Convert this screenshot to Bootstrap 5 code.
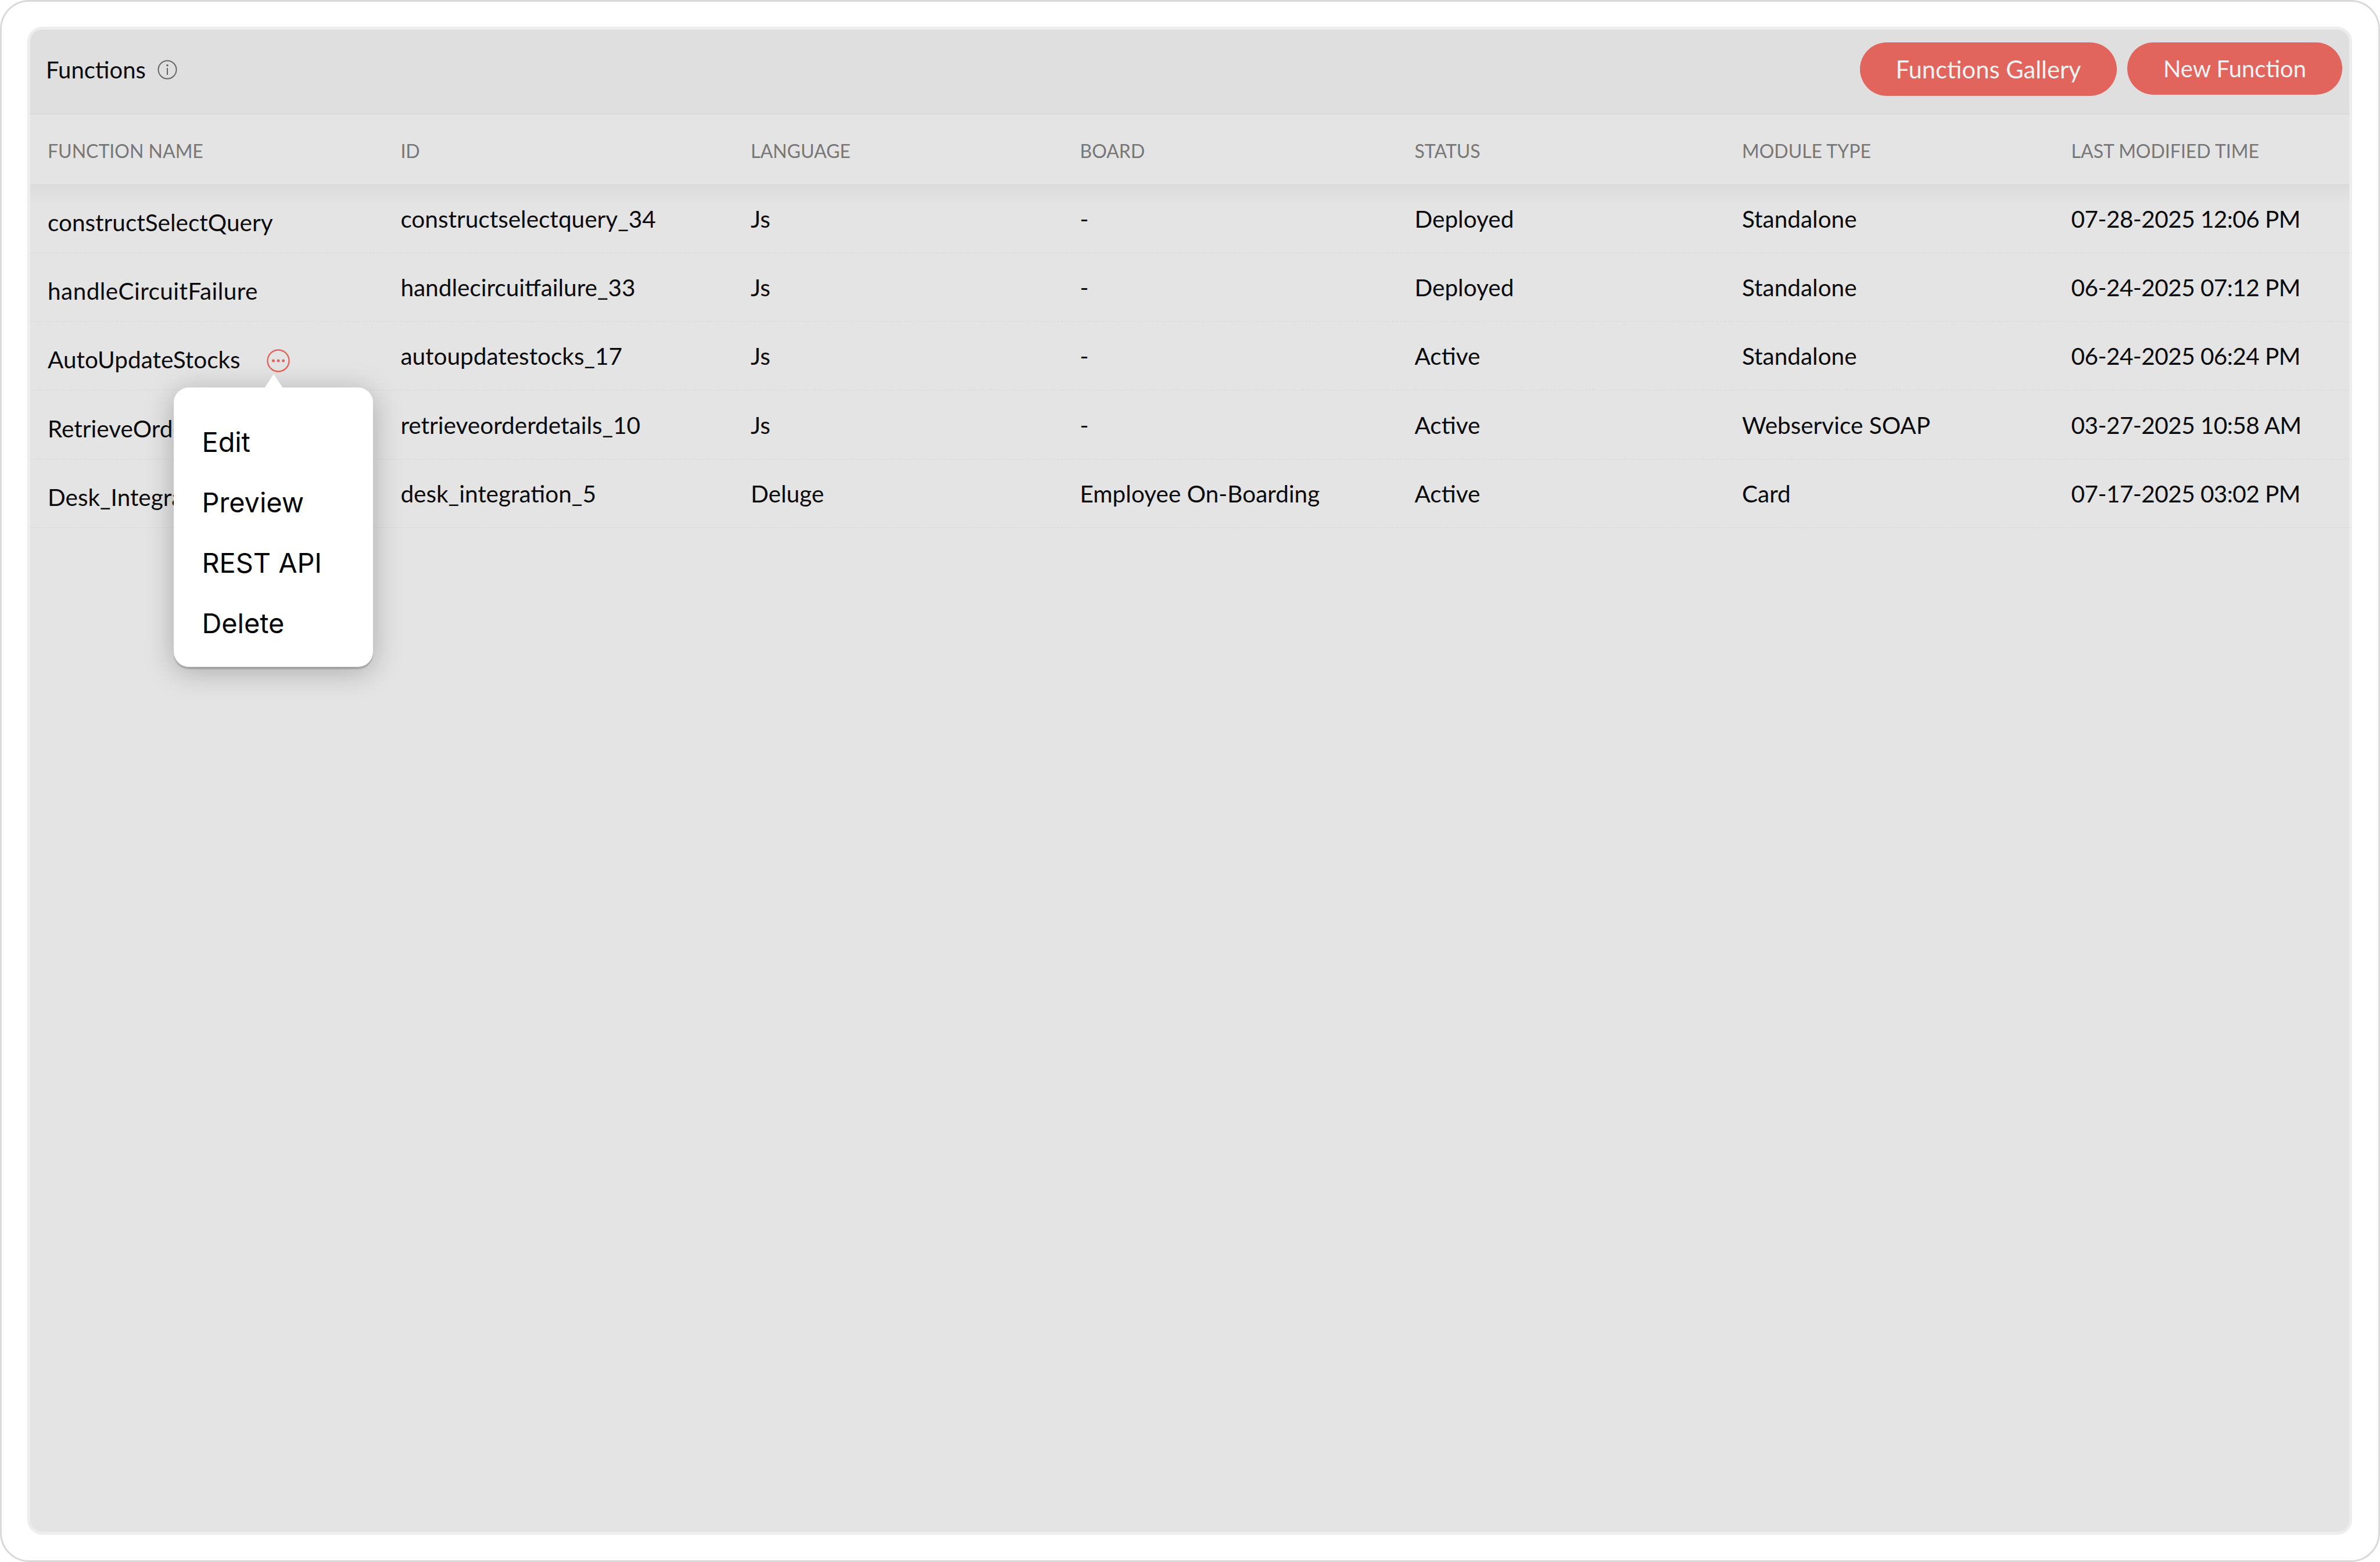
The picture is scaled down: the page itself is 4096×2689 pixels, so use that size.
<!DOCTYPE html>
<html lang="en">
<head>
<meta charset="utf-8">
<title>Functions</title>
<link href="https://cdn.jsdelivr.net/npm/bootstrap@5.3.0/dist/css/bootstrap.min.css" rel="stylesheet">
<style>
html,body{height:100%;margin:0;background:#fff;font-family:"Lato","Liberation Sans",sans-serif;}
.fn-frame{height:2689px;width:4096px;border:3px solid #d9d9d9;border-radius:50px;padding:43px 45px 44px 44px;background:#fff;}
.fn-panel{height:100%;border:5px solid #ededed;border-radius:26px;background:#e4e4e4;position:relative;overflow:hidden;}
.fn-head{height:146px;background:#dfdfdf;border-bottom:2px solid #d9d9d9;padding:22px 12px 0 27px;}
.fn-title{font-size:40px;color:#0a0a0a;line-height:1;margin-top:27px;}
.fn-info{width:36px;height:36px;margin-left:19px;margin-top:29px;}
.fn-btn{background:#e1655c;color:#f2f2f2;border:0;border-radius:46px;font-size:41.7px;line-height:1;padding:0;font-family:"Lato","Liberation Sans",sans-serif;}
.fn-btn:hover,.fn-btn:active{background:#e1655c!important;color:#f2f2f2!important;}
.fn-btn-gallery{width:442px;height:92px;padding-top:2px;}
.fn-btn-new{width:370px;height:90px;font-size:40px;}
.fn-table{table-layout:fixed;width:100%;margin:0;--bs-table-bg:transparent;}
.fn-table th,.fn-table td{padding:0 0 0 30px;vertical-align:middle;border:0;color:#0a0a0a;font-size:40.5px;font-weight:400;white-space:nowrap;box-shadow:none;}
.fn-table thead th{height:120px;padding-top:5px;color:#777;font-size:32px;}
.fn-table tbody td{height:118.3px;padding-top:2px;border-bottom:1px dashed #d8d8d8;}
.fn-table tbody tr:first-child td{background:linear-gradient(#dbdbdb,#e4e4e4 34px);}
.fn-table td.fn-name{padding-top:14px;}
.fn-table td.fn-wide{letter-spacing:.45px;}
.fn-table td.fn-time{letter-spacing:-.55px;}
.fn-c1{width:607.4px}.fn-c2{width:602.6px}.fn-c3{width:566.5px}.fn-c4{width:576px}.fn-c5{width:563.5px}.fn-c6{width:566.6px}
.fn-more{width:42px;height:42px;margin-left:44px;vertical-align:-8px;}
.fn-menu{left:246.5px;top:616px;width:343px;height:481px;padding:42px 0 0;border:0;border-radius:26px;background:#fff;box-shadow:0 8px 50px rgba(0,0,0,.26),0 4px 1px rgba(0,0,0,.16);--bs-dropdown-min-width:0;}
.fn-menu::before{content:"";position:absolute;left:156px;top:-23px;border-left:16.5px solid transparent;border-right:16.5px solid transparent;border-bottom:24px solid #fff;}
.fn-menu .dropdown-item{height:104px;padding:0 0 0 49px;font-family:"Inter","Liberation Sans",sans-serif;font-size:46.8px;font-weight:400;line-height:104px;color:#000;}
.fn-menu .dropdown-item:hover{background:transparent;}
</style>
</head>
<body>
<div class="fn-frame">
  <div class="fn-panel">
    <div class="fn-head d-flex align-items-start">
      <div class="fn-title">Functions</div>
      <svg class="fn-info" viewBox="0 0 36 36" fill="none" stroke="#666" aria-hidden="true"><circle cx="18" cy="18" r="15.5" stroke-width="2"/><circle cx="18" cy="10.5" r="1.8" fill="#666" stroke="none"/><path d="M18 15v12" stroke-width="2"/></svg>
      <div class="ms-auto d-flex align-items-start" style="gap:18px">
        <button type="button" class="btn fn-btn fn-btn-gallery">Functions Gallery</button>
        <button type="button" class="btn fn-btn fn-btn-new">New Function</button>
      </div>
    </div>
    <table class="table fn-table">
      <colgroup><col class="fn-c1"><col class="fn-c2"><col class="fn-c3"><col class="fn-c4"><col class="fn-c5"><col class="fn-c6"><col></colgroup>
      <thead><tr><th>FUNCTION NAME</th><th>ID</th><th>LANGUAGE</th><th>BOARD</th><th>STATUS</th><th>MODULE TYPE</th><th>LAST MODIFIED TIME</th></tr></thead>
      <tbody>
        <tr><td class="fn-name">constructSelectQuery</td><td>constructselectquery_34</td><td>Js</td><td>-</td><td>Deployed</td><td>Standalone</td><td class="fn-time">07-28-2025 12:06 PM</td></tr>
        <tr><td class="fn-name fn-wide">handleCircuitFailure</td><td>handlecircuitfailure_33</td><td>Js</td><td>-</td><td>Deployed</td><td>Standalone</td><td class="fn-time">06-24-2025 07:12 PM</td></tr>
        <tr><td class="fn-name">AutoUpdateStocks<svg class="fn-more" viewBox="0 0 42 42" fill="none" aria-hidden="true"><circle cx="21" cy="21" r="18.5" stroke="#e1655c" stroke-width="2.4"/><circle cx="12.4" cy="21" r="2.5" fill="#e1655c"/><circle cx="21" cy="21" r="2.5" fill="#e1655c"/><circle cx="29.6" cy="21" r="2.5" fill="#e1655c"/></svg></td><td>autoupdatestocks_17</td><td>Js</td><td>-</td><td>Active</td><td>Standalone</td><td class="fn-time">06-24-2025 06:24 PM</td></tr>
        <tr><td class="fn-name">RetrieveOrderDetails</td><td>retrieveorderdetails_10</td><td>Js</td><td>-</td><td>Active</td><td>Webservice SOAP</td><td class="fn-time">03-27-2025 10:58 AM</td></tr>
        <tr><td class="fn-name">Desk_Integration</td><td>desk_integration_5</td><td>Deluge</td><td>Employee On-Boarding</td><td>Active</td><td>Card</td><td class="fn-time">07-17-2025 03:02 PM</td></tr>
      </tbody>
    </table>
    <ul class="dropdown-menu show fn-menu">
      <li><a class="dropdown-item" href="#">Edit</a></li>
      <li><a class="dropdown-item" href="#">Preview</a></li>
      <li><a class="dropdown-item" href="#">REST API</a></li>
      <li><a class="dropdown-item" href="#">Delete</a></li>
    </ul>
  </div>
</div>
<script src="https://cdn.jsdelivr.net/npm/bootstrap@5.3.0/dist/js/bootstrap.bundle.min.js"></script>
</body>
</html>
